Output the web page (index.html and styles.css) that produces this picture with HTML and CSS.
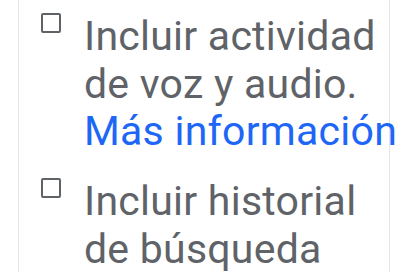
FILE: index.html
```html
<!DOCTYPE html>
<html lang="es">
<head>
    <meta charset="UTF-8">
    <meta name="viewport" content="width=device-width, initial-scale=1.0">
    <title>Controles de actividad</title>
    <link rel="stylesheet" href="styles.css">
</head>
<body>
    <div class="options-panel">
        <label class="option">
            <input type="checkbox" class="option-check">
            <span class="option-text">Incluir actividad de voz y audio. <a href="#" class="more-link">Más información</a></span>
        </label>
        <label class="option">
            <input type="checkbox" class="option-check">
            <span class="option-text">Incluir historial de búsqueda</span>
        </label>
    </div>
</body>
</html>
```

FILE: styles.css
```css
* {
    margin: 0;
    padding: 0;
    box-sizing: border-box;
    font-family: 'Roboto', 'Noto Sans', sans-serif;
}

body {
    background: white;
    width: 408px;
    height: 272px;
    overflow: hidden;
}

.options-panel {
    margin-left: 18px;
    width: 372px;
    min-height: 272px;
    border-left: 1px solid #e3e4e6;
    border-right: 1px solid #e3e4e6;
    padding: 13px 0 0 22px;
    display: flex;
    flex-direction: column;
    gap: 22.5px;
}

.option {
    display: flex;
    align-items: flex-start;
    gap: 23px;
    cursor: pointer;
}

.option-check {
    appearance: none;
    -webkit-appearance: none;
    flex: none;
    width: 20px;
    height: 20px;
    border: 2px solid #5f6368;
    border-radius: 2px;
    background: white;
    cursor: pointer;
}

.option-text {
    flex: none;
    width: 320px;
    font-size: 41px;
    letter-spacing: 0.25px;
    line-height: 47.5px;
    color: #5f6368;
}

.more-link {
    color: #1e66f5;
    text-decoration: none;
    white-space: nowrap;
}
```
